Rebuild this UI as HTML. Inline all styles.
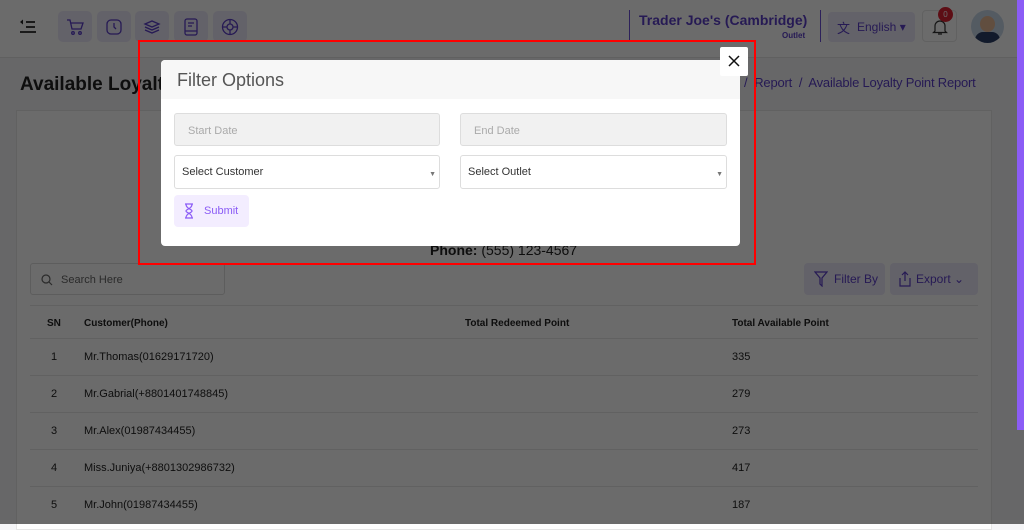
<!DOCTYPE html>
<html><head><meta charset="utf-8"><style>
*{box-sizing:border-box;margin:0;padding:0}
body{width:1024px;height:524px;overflow:hidden;font-family:"Liberation Sans",sans-serif;background:#f5f5f7;position:relative;color:#222}
.hdr{position:absolute;left:0;top:0;width:1024px;height:58px;background:#fff;border-bottom:1px solid #e5e5e5}
.ib{position:absolute;top:11px;width:34px;height:31px;background:#ede9fb;border-radius:5px}
.ib svg{position:absolute;left:8px;top:7px}
.abs{position:absolute}
.card{position:absolute;left:16px;top:110px;width:976px;height:420px;background:#fff;border:1px solid #e6e6e6}
.row{position:absolute;left:30px;width:948px;height:37px;border-top:1px solid #e8e8e8;font-size:11px}
.row span{position:absolute;top:12px}
.ov{position:absolute;left:0;top:0;width:1024px;height:524px;background:rgba(0,0,0,.58)}
.inp{position:absolute;height:33px;border:1px solid #ddd;border-radius:3px;font-size:11px;padding:11px 13px}
</style></head><body>
<div class="hdr">
<svg class="abs" style="left:19px;top:18px" width="18" height="16" viewBox="0 0 18 16"><path d="M1 4l3-2.5v5z" fill="#222"/><path d="M7 4h9M7 9h9M1 14h16" stroke="#222" stroke-width="1.8"/></svg>
<div class="ib" style="left:58px"><svg width="18" height="18" viewBox="0 0 18 18" fill="none" stroke="#5b3fc9" stroke-width="1.3"><path d="M1 2h3l2 9h9l2-6H5"/><circle cx="7" cy="15" r="1.3"/><circle cx="14" cy="15" r="1.3"/></svg></div>
<div class="ib" style="left:97px"><svg width="18" height="18" viewBox="0 0 18 18" fill="none" stroke="#5b3fc9" stroke-width="1.3"><rect x="2" y="2" width="14" height="14" rx="4"/><path d="M9 5v4l2 2"/></svg></div>
<div class="ib" style="left:135px"><svg width="18" height="18" viewBox="0 0 18 18" fill="none" stroke="#5b3fc9" stroke-width="1.3"><path d="M2 6l7-3 7 3-7 3z M2 9l7 3 7-3 M2 12l7 3 7-3"/></svg></div>
<div class="ib" style="left:174px"><svg width="18" height="18" viewBox="0 0 18 18" fill="none" stroke="#5b3fc9" stroke-width="1.3"><rect x="3" y="1" width="12" height="16" rx="2"/><path d="M6 5h6M6 8h4M3 13h12"/></svg></div>
<div class="ib" style="left:213px"><svg width="18" height="18" viewBox="0 0 18 18" fill="none" stroke="#5b3fc9" stroke-width="1.3"><circle cx="9" cy="9" r="7.5"/><circle cx="9" cy="9" r="3"/><path d="M9 1.5v4M9 12.5v4M1.5 9h4M12.5 9h4"/></svg></div>
<div class="abs" style="left:629px;top:10px;width:1px;height:32px;background:#6d4fd6"></div>
<div class="abs" style="left:639px;top:12px;font-size:14px;font-weight:bold;color:#5b3fc9">Trader Joe's (Cambridge)</div>
<div class="abs" style="left:782px;top:31px;font-size:8px;font-weight:bold;color:#5b3fc9">Outlet</div>
<div class="abs" style="left:820px;top:10px;width:1px;height:32px;background:#6d4fd6"></div>
<div class="abs" style="left:828px;top:12px;width:87px;height:30px;background:#ede9fb;border-radius:4px;font-size:12px;color:#5b3fc9;padding:8px 0 0 29px">English ▾<span style="position:absolute;left:9px;top:6px;font-size:13px">文</span></div>
<div class="abs" style="left:922px;top:10px;width:35px;height:32px;border:1px solid #e6e6e6;border-radius:4px"><svg class="abs" style="left:9px;top:7px" width="16" height="18" viewBox="0 0 16 18" fill="none" stroke="#333" stroke-width="1.2"><path d="M3 13V8a5 5 0 0110 0v5l1.5 1.5h-13z M6 16h4"/></svg></div>
<div class="abs" style="left:938px;top:7px;width:15px;height:15px;border-radius:50%;background:#d23;color:#fff;font-size:8px;text-align:center;line-height:15px">0</div>
<div class="abs" style="left:971px;top:10px;width:33px;height:33px;border-radius:50%;background:#c9d8ea;overflow:hidden"><div class="abs" style="left:9px;top:6px;width:15px;height:16px;border-radius:50%;background:#e8b996"></div><div class="abs" style="left:4px;top:22px;width:25px;height:14px;border-radius:8px 8px 0 0;background:#2c3e66"></div></div>
</div>
<div class="abs" style="left:20px;top:74px;font-size:19px;font-weight:bold;color:#222">Available Loyalty Point Report</div>
<div class="abs" style="left:744px;top:75px;font-size:13px;color:#5b3fc9;letter-spacing:-0.2px">/&nbsp; Report &nbsp;/&nbsp; Available Loyalty Point Report</div>
<div class="card"></div>
<div class="abs" style="left:430px;top:242px;font-size:14px;color:#222"><b>Phone:</b> (555) 123-4567</div>
<div class="abs" style="left:30px;top:263px;width:195px;height:32px;border:1px solid #ddd;border-radius:3px;font-size:11px;color:#666;padding:10px 0 0 30px">Search Here<svg class="abs" style="left:10px;top:10px" width="12" height="12" viewBox="0 0 12 12" fill="none" stroke="#666" stroke-width="1.2"><circle cx="5" cy="5" r="4"/><path d="M8 8l3 3"/></svg></div>
<div class="abs" style="left:804px;top:263px;width:81px;height:32px;background:#ede9fb;border-radius:4px;font-size:12px;color:#5b3fc9;padding:9px 0 0 30px">Filter By<svg class="abs" style="left:10px;top:8px" width="14" height="16" viewBox="0 0 14 16" fill="none" stroke="#5b3fc9" stroke-width="1.2"><path d="M1 1h12l-5 6v8l-2-2V7z"/></svg></div>
<div class="abs" style="left:890px;top:263px;width:88px;height:32px;background:#ede9fb;border-radius:4px;font-size:12px;color:#5b3fc9;padding:9px 0 0 26px">Export ⌄<svg class="abs" style="left:9px;top:8px" width="12" height="16" viewBox="0 0 12 16" fill="none" stroke="#5b3fc9" stroke-width="1.2"><path d="M6 10V1M3 4l3-3 3 3M1 7v8h10V7"/></svg></div>
<div class="row" style="top:305px;font-weight:bold;font-size:10px"><span style="left:17px">SN</span><span style="left:54px">Customer(Phone)</span><span style="left:435px">Total Redeemed Point</span><span style="left:702px">Total Available Point</span></div>
<div class="row" style="top:338px"><span style="left:21px">1</span><span style="left:54px">Mr.Thomas(01629171720)</span><span style="left:702px">335</span></div>
<div class="row" style="top:375px"><span style="left:21px">2</span><span style="left:54px">Mr.Gabrial(+8801401748845)</span><span style="left:702px">279</span></div>
<div class="row" style="top:412px"><span style="left:21px">3</span><span style="left:54px">Mr.Alex(01987434455)</span><span style="left:702px">273</span></div>
<div class="row" style="top:449px"><span style="left:21px">4</span><span style="left:54px">Miss.Juniya(+8801302986732)</span><span style="left:702px">417</span></div>
<div class="row" style="top:486px"><span style="left:21px">5</span><span style="left:54px">Mr.John(01987434455)</span><span style="left:702px">187</span></div>
<div class="ov"></div>
<div class="abs" style="left:1017px;top:0;width:7px;height:430px;background:#8b5cf6"></div>
<div class="abs" style="left:138px;top:40px;width:618px;height:225px;border:2px solid #f00"></div>
<div class="abs" style="left:161px;top:60px;width:579px;height:186px;background:#fff;border-radius:4px;overflow:hidden">
<div style="height:39px;background:#f7f7f7;font-size:18px;color:#555;padding:10px 0 0 16px">Filter Options</div>
<div class="inp" style="left:13px;top:53px;width:266px;background:#f1f1f1;color:#aaa">Start Date</div>
<div class="inp" style="left:299px;top:53px;width:267px;background:#f1f1f1;color:#aaa">End Date</div>
<div class="inp" style="left:13px;top:95px;width:266px;height:34px;color:#333;padding:10px 7px">Select Customer<span style="position:absolute;right:3px;top:15px;font-size:7px;color:#777">▼</span></div>
<div class="inp" style="left:299px;top:95px;width:267px;height:34px;color:#333;padding:10px 7px">Select Outlet<span style="position:absolute;right:3px;top:15px;font-size:7px;color:#777">▼</span></div>
<div class="abs" style="left:13px;top:135px;width:75px;height:32px;background:#f3edff;border-radius:4px;font-size:11px;color:#8b5cf6;padding:10px 0 0 30px">Submit
<svg class="abs" style="left:10px;top:8px" width="10" height="16" viewBox="0 0 10 16"><path d="M1 1h8M1 15h8M2 1c0 5 6 5 6 7s-6 2-6 7M8 1c0 5-6 5-6 7s6 2 6 7" stroke="#8b5cf6" fill="none" stroke-width="1.2"/></svg></div>
</div>
<div class="abs" style="left:720px;top:47px;width:28px;height:29px;background:#fff;border-radius:2px"><svg class="abs" style="left:8px;top:8px" width="12" height="12" viewBox="0 0 12 12"><path d="M1 1l10 10M11 1L1 11" stroke="#111" stroke-width="1.5"/></svg></div>
</body></html>
